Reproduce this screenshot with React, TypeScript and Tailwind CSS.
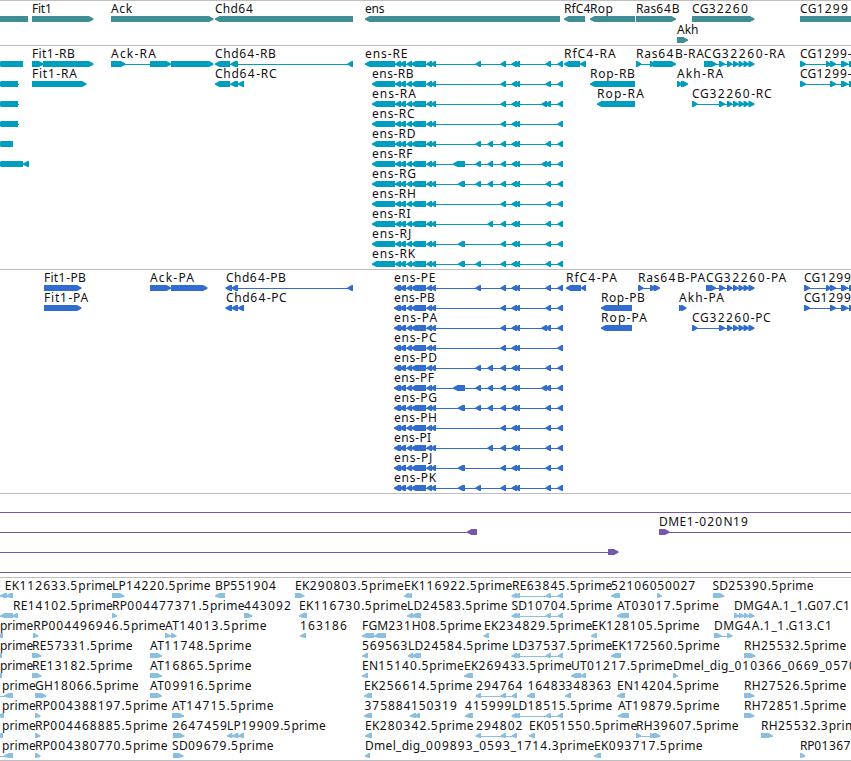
type Dir = "left" | "right";
type Span = [number, number];

type Feature = {
  row: number;
  dir: Dir;
  blocks: Span[];
  line?: Span;
  label?: string;
  // first and last pixel column of the label
  at?: Span;
};

type TrackData = {
  name: string;
  height: string;
  color: string;
  thickness: number;
  features: Feature[];
};

const TIP = 6;

function f(row: number, dir: Dir, blocks: Span[], label?: string, at?: Span, line?: Span): Feature {
  return { row, dir, blocks, label, at, line };
}

// Coding exons shared by all of the ens isoforms
const ENS_CORE: Span[] = [[399.5, 406], [406.5, 412], [411, 426], [426.5, 432], [431, 436]];
const ENS_TAIL: Span[] = [[500.5, 506], [511.5, 517], [515, 520], [557.5, 563]];

const ENS: { id: string; rEnd: number; pEnd: number; extra: Span[] }[] = [
  { id: "E", rEnd: 407.3, pEnd: 435.3, extra: [[475.5, 481], [545.5, 551]] },
  { id: "B", rEnd: 413.3, pEnd: 434.7, extra: [[545.5, 551]] },
  { id: "A", rEnd: 415.7, pEnd: 437, extra: [[541.5, 547], [545.5, 551]] },
  { id: "C", rEnd: 414.3, pEnd: 436.3, extra: [] },
  { id: "D", rEnd: 415.3, pEnd: 436.7, extra: [[475.5, 481], [487.5, 493], [545.5, 551]] },
  { id: "F", rEnd: 412.3, pEnd: 433.7, extra: [[453, 465], [475.5, 481], [487.5, 493], [541.5, 547], [545.5, 551]] },
  { id: "G", rEnd: 415.7, pEnd: 436.7, extra: [[458, 465], [475.5, 481], [487.5, 493], [545.5, 551]] },
  { id: "H", rEnd: 415.7, pEnd: 436.7, extra: [[545.5, 551]] },
  { id: "I", rEnd: 410.3, pEnd: 431, extra: [[487.5, 493], [545.5, 551]] },
  { id: "J", rEnd: 411, pEnd: 432, extra: [[458, 465], [545.5, 551]] },
  { id: "K", rEnd: 415, pEnd: 436, extra: [[458, 465], [475.5, 481], [545.5, 551]] },
];

const ensTranscripts = ENS.map((e, i) => {
  const start = i === 0 ? 365 : 372;
  const blocks: Span[] = [[start, 395], [395, 401], ...ENS_CORE, ...e.extra, ...ENS_TAIL];
  return f(i, "left", blocks, `ens-R${e.id}`, [start, e.rEnd], [395, 563]);
});

const ensProteins = ENS.map((e, i) => {
  const blocks: Span[] = [[394, 401], ...ENS_CORE, ...e.extra, ...ENS_TAIL];
  return f(i, "left", blocks, `ens-P${e.id}`, [394, e.pEnd], [395, 563]);
});

const CG32260_TAIL: Span[] = [[719, 725], [727, 732.5], [733, 738.5], [738.5, 744], [743.5, 749], [748.5, 754.5]];
const EST_LONG: Span[] = [[511.5, 517], [515, 520], [545.5, 551], [557.5, 563]];
const EST_SHORT: Span[] = [[475.5, 481], [500.5, 506], [511.5, 517]];

const tracks: TrackData[] = [
  {
    name: "genes",
    height: "h-[45px]",
    color: "#408e94",
    thickness: 6,
    features: [
      f(0, "left", [[-20, 28]]),
      f(0, "right", [[32, 93.5]], "Fit1", [32, 52.3]),
      f(0, "right", [[111, 213.5]], "Ack", [111, 132]),
      f(0, "left", [[215, 353]], "Chd64", [215, 253.5]),
      f(0, "left", [[365, 560]], "ens", [365, 384.3]),
      f(0, "left", [[564, 585]], "RfC4", [564, 591]),
      f(0, "left", [[590, 635]], "Rop", [590, 612.7]),
      f(0, "right", [[636, 676]], "Ras64B", [636, 679.3]),
      f(0, "right", [[692, 754.5]], "CG32260", [692, 748.3]),
      f(0, "right", [[800, 870]], "CG1299", [800, 848.3]),
      f(1.05, "right", [[677, 688]], "Akh", [677, 698.3]),
    ],
  },
  {
    name: "transcripts",
    height: "h-[224px]",
    color: "#009ebe",
    thickness: 6,
    features: [
      f(0, "left", [[-3, 23]]),
      f(1, "left", [[-3, 18]], undefined, undefined, [18, 19]),
      f(2, "left", [[-3, 18]], undefined, undefined, [18, 19]),
      f(3, "left", [[-3, 18]], undefined, undefined, [18, 19]),
      f(4, "left", [[-3, 13]]),
      f(5, "left", [[-3, 23], [23, 29]]),
      f(0, "right", [[32, 43.5], [43, 93.5]], "Fit1-RB", [32, 74.5]),
      f(1, "right", [[32, 86.5]], "Fit1-RA", [32, 76.7]),
      f(0, "right", [[111, 125.5], [150, 171], [171, 213.5]], "Ack-RA", [111, 155.7], [111, 200]),
      f(0, "left", [[215, 230], [230.5, 238], [347.5, 353]], "Chd64-RB", [215, 275.7], [230, 353]),
      f(1, "left", [[215, 230], [230.5, 238], [238, 244]], "Chd64-RC", [215, 276.3], [230, 243]),
      ...ensTranscripts,
      f(0, "left", [[564, 580], [580, 586]], "RfC4-RA", [564, 615.5]),
      f(1, "left", [[590, 635]], "Rop-RB", [590, 634.7]),
      f(2, "left", [[597, 635]], "Rop-RA", [597, 643.7]),
      f(0, "right", [[636, 641.5], [650, 655], [653, 676]], "Ras64B-RA", [636, 703.8], [636, 660]),
      f(0, "right", [[704, 716.5], ...CG32260_TAIL], "CG32260-RA", [704, 784.8], [704, 750]),
      f(2, "right", [[692, 697.5], ...CG32260_TAIL], "CG32260-RC", [692, 771.3], [692, 750]),
      f(1, "right", [[677, 682], [681, 688]], "Akh-RA", [677, 723]),
      f(0, "right", [[800, 806], [826, 831], [830, 836], [841, 848], [849, 855]], "CG1299-", [800, 851.5], [800, 851]),
      f(1, "right", [[800, 806], [830, 836], [841, 848], [849, 855]], "CG1299-", [800, 851.5], [800, 851]),
    ],
  },
  {
    name: "proteins",
    height: "h-[224px]",
    color: "#306dce",
    thickness: 6,
    features: [
      f(0, "right", [[44, 81.5]], "Fit1-PB", [44, 85.5]),
      f(1, "right", [[44, 81.5]], "Fit1-PA", [44, 88]),
      f(0, "right", [[150, 171], [171, 207.5]], "Ack-PA", [150, 193.7]),
      f(0, "left", [[225.5, 232], [231.5, 238], [347.5, 353]], "Chd64-PB", [226, 285.7], [230, 353]),
      f(1, "left", [[225.5, 232], [231.5, 238], [238, 244]], "Chd64-PC", [226, 286.5], [230, 243]),
      ...ensProteins,
      f(0, "left", [[566, 581], [581, 586]], "RfC4-PA", [566, 616.7]),
      f(1, "left", [[601, 632]], "Rop-PB", [601, 644.7]),
      f(2, "left", [[601, 632]], "Rop-PA", [601, 646.7]),
      f(0, "right", [[638, 643.5], [650, 655.5], [653.5, 660]], "Ras64B-PA", [638, 705], [638, 658]),
      f(0, "right", [[706, 716], ...CG32260_TAIL], "CG32260-PA", [706, 786], [706, 750]),
      f(2, "right", [[692, 697.5], ...CG32260_TAIL], "CG32260-PC", [692, 770.5], [692, 750]),
      f(1, "right", [[679, 683], [681, 686.5]], "Akh-PA", [679, 723.7]),
      f(0, "right", [[804, 810], [826, 831], [830, 836], [841, 848], [849, 855]], "CG1299", [804, 851.5], [804, 851]),
      f(1, "right", [[804, 810], [830, 836], [841, 848], [849, 855]], "CG1299", [804, 851.5], [804, 851]),
    ],
  },
  {
    name: "clones",
    height: "h-[84px]",
    color: "#7657a8",
    thickness: 6,
    features: [
      f(0, "right", [], undefined, undefined, [0, 851]),
      f(1, "left", [[467, 477]], undefined, undefined, [0, 470]),
      f(1, "right", [[659, 669.5]], "DME1-020N19", [659, 748.5], [665, 851]),
      f(2, "right", [[608, 618.5]], undefined, undefined, [0, 610]),
      f(3, "right", [], undefined, undefined, [0, 851]),
    ],
  },
  {
    name: "ests",
    height: "h-[184px] border-b",
    color: "#8abfe0",
    thickness: 5,
    features: [
      f(0, "left", [[0, 7], [6, 13]], "EK112633.5prime", [4.7, 112.7]),
      f(0, "right", [[112, 124.5]], "LP14220.5prime", [112, 210.3]),
      f(0, "left", [[215, 225]], "BP551904", [215, 276.3]),
      f(0, "right", [[295, 304.5]], "EK290803.5prime", [295, 403.5]),
      f(0, "left", [[404, 409], [407, 412]], "EK116922.5prime", [404, 512]),
      f(0, "left", EST_LONG, "RE63845.5prime", [512, 612], [515, 563]),
      f(0, "left", [[611, 620]], "521060", [611, 657.2]),
      f(0, "right", [[657, 662]], "50027", [657.3, 695.7]),
      f(0, "right", [[713, 724.5]], "SD25390.5prime", [712.5, 813.3]),

      f(1, "left", [[0, 13], [12, 18]], "RE14102.5prime", [13, 112.7]),
      f(1, "right", [[112, 117]], "RP004477371.5prime", [112, 244.3]),
      f(1, "right", [[244, 252.5]], "443092", [244, 291.3]),
      f(1, "left", [[299, 307]], "EK116730.5prime", [299, 407]),
      f(1, "left", [[407, 413], [411.5, 421]], "LD24583.5prime", [407, 507.3]),
      f(1, "left", EST_LONG, "SD10704.5prime", [511.5, 612], [515, 563]),
      f(1, "left", [[617, 629]], "AT03017.5prime", [617, 718.5]),
      f(1, "right", [[734, 739.5], [739, 744.5], [744, 749.5], [749, 754.5]], "DMG4A.1_1.G07.C1", [734, 850.5]),

      f(2, "left", [[-3, 3]], "prime", [0, 33]),
      f(2, "right", [[33, 38.5]], "RP004496946.5prime", [33.2, 165.3]),
      f(2, "right", [[165, 171], [171, 176.5]], "AT14013.5prime", [165, 266.3]),
      f(2, "left", [[300, 306]], "163186", [300, 347.3]),
      f(2, "left", [[362, 374], [374, 386]], "FGM231H08.5prime", [362, 481.3]),
      f(2, "left", [[483.5, 489]], "EK234829.5prime", [484, 592]),
      f(2, "left", [[591, 597]], "EK128105.5prime", [591.5, 699.3]),
      f(2, "right", [[714, 722], [727, 732.5]], "DMG4A.1_1.G13.C1", [714, 832.3], [714, 728]),

      f(3, "left", [[-4, 2]], "prime", [0, 33]),
      f(3, "right", [[32, 41.5]], "RE57331.5prime", [32, 132.3]),
      f(3, "right", [[150, 162]], "AT11748.5prime", [150, 251.3]),
      f(3, "left", [[362, 368]], "569563", [362, 408]),
      f(3, "left", [[408, 413], [411.5, 421]], "LD24584.5prime", [408, 508.3]),
      f(3, "left", EST_LONG, "LD37537.5prime", [512, 612], [515, 563]),
      f(3, "left", [[611, 621]], "EK172560.5prime", [611.5, 719.5]),
      f(3, "right", [[744, 755.5]], "RH25532.5prime", [744, 846]),

      f(4, "left", [[-4, 2]], "prime", [0, 33]),
      f(4, "right", [[32, 41.5]], "RE13182.5prime", [32, 132.3]),
      f(4, "right", [[150, 162]], "AT16865.5prime", [150, 251.3]),
      f(4, "left", [[362, 368]], "EN15140.5prime", [362, 463.7]),
      f(4, "left", [[464, 473]], "EK269433.5prime", [464, 571.5]),
      f(4, "left", [[571, 581], [580, 586]], "UT01217.5prime", [571, 672.7]),
      f(4, "right", [[673, 678]], "Dmel_dig_010366_0669_0570", [673, 856.5]),

      f(5, "left", [[4, 13]], "prime", [2, 35.5], [0, 8]),
      f(5, "right", [[35, 46.5]], "GH18066.5prime", [35, 138.3]),
      f(5, "right", [[150, 162]], "AT09916.5prime", [150, 251.3]),
      f(5, "left", [[364, 372]], "EK256614.5prime", [364, 472.3]),
      f(5, "left", EST_SHORT, "294764", [476, 523], [478, 516]),
      f(5, "left", [[527, 535]], "16483", [527.5, 566]),
      f(5, "left", [[565, 571]], "348363", [565.5, 611.7]),
      f(5, "left", [[617, 625]], "EN14204.5prime", [617, 718.5]),
      f(5, "right", [[744, 754.5]], "RH27526.5prime", [744, 846]),

      f(6, "left", [[-2, 4]], "prime", [2, 35.5]),
      f(6, "right", [[35, 40.5]], "RP004388197.5prime", [35, 167.3]),
      f(6, "right", [[172, 184]], "AT14715.5prime", [172, 273.3]),
      f(6, "left", [[364, 372]], "375884", [364.5, 411]),
      f(6, "left", [[410, 416], [414, 420]], "150319", [411, 457.3]),
      f(6, "left", [[465, 473]], "415999", [465, 512]),
      f(6, "left", EST_LONG, "LD18515.5prime", [512, 612], [515, 563]),
      f(6, "left", [[618, 629]], "AT19879.5prime", [618, 719.3]),
      f(6, "right", [[744, 754.5]], "RH72851.5prime", [744, 846]),

      f(7, "left", [[-3, 3]], "prime", [2, 35.5]),
      f(7, "right", [[35, 40.5]], "RP004468885.5prime", [35, 167.3]),
      f(7, "right", [[173, 184.5]], "2647459", [172.5, 227.5]),
      f(7, "left", [[227, 232.5], [232, 238.5], [238, 244]], "LP19909.5prime", [227, 325.5]),
      f(7, "left", [[365, 372]], "EK280342.5prime", [365, 473.3]),
      f(7, "left", EST_SHORT, "294802", [476, 523], [478, 516]),
      f(7, "left", [[529, 535]], "EK051550.5prime", [529, 637]),
      f(7, "right", [[636, 641.5], [650, 655.5], [653, 660.5]], "RH39607.5prime", [636, 738.3], [636, 655]),
      f(7, "right", [[761, 773]], "RH25532.3prime", [761, 863]),

      f(8, "left", [[4, 13]], "prime", [2, 35.5], [0, 8]),
      f(8, "right", [[35, 40.5]], "RP004380770.5prime", [35, 167.3]),
      f(8, "right", [[173, 183.5]], "SD09679.5prime", [172, 273.3]),
      f(8, "left", [[365, 370]], "Dmel_dig_009893_0593_1714.3prime", [365, 594]),
      f(8, "left", [[594, 601]], "EK093717.5prime", [594, 702.3]),
      f(8, "right", [[800, 805.5]], "RP01367", [800, 851]),
    ],
  },
];

// A bar whose leading end narrows to a slightly blunt point
function arrowPoints([a, b]: Span, top: number, thickness: number, dir: Dir) {
  const tip = Math.min(TIP, b - a);
  const shoulder = tip * 0.75;
  const mid = top + 3;
  const bottom = top + thickness;
  if (dir === "left") {
    return `${a},${mid - 0.6} ${a + shoulder},${top} ${b},${top} ${b},${bottom} ${a + shoulder},${bottom} ${a},${mid + 0.8}`;
  }
  return `${a},${top} ${b - shoulder},${top} ${b},${mid - 0.6} ${b},${mid + 0.8} ${b - shoulder},${bottom} ${a},${bottom}`;
}

// Digits are set a little wider than the letters around them
function Label({ text, at, y }: { text: string; at: Span; y: number }) {
  return (
    <text x={at[0]} y={y} textLength={at[1] - at[0] + 0.2} lengthAdjust="spacing" fill="#111">
      {text.split(/(\d+)/).map((run, i) =>
        /\d/.test(run) ? (
          <tspan key={i} className="tracking-[0.75px]">
            {run}
          </tspan>
        ) : (
          run
        ),
      )}
    </text>
  );
}

function FeatureGlyph({ feature, color, thickness }: { feature: Feature; color: string; thickness: number }) {
  const top = 15 + feature.row * 20;
  const { line, blocks, dir, label, at } = feature;
  return (
    <g fill={color}>
      {line && <rect x={line[0]} y={top + 3} width={line[1] - line[0]} height={1} />}
      {blocks.map((b, i) => (
        <polygon key={i} points={arrowPoints(b, top, thickness, dir)} />
      ))}
      {label && at && <Label text={label} at={at} y={top - 3} />}
    </g>
  );
}

function Track({ track }: { track: TrackData }) {
  return (
    <section className={`w-full overflow-hidden border-t border-[#bebebe] ${track.height}`}>
      <svg className="block h-full w-full font-['Noto_Sans',sans-serif] text-[12px]" aria-label={track.name}>
        {track.features.map((feature, i) => (
          <FeatureGlyph key={i} feature={feature} color={track.color} thickness={track.thickness} />
        ))}
      </svg>
    </section>
  );
}

export default function App() {
  return (
    <main className="flex h-[761px] w-[851px] flex-col overflow-hidden bg-white">
      {tracks.map((track) => (
        <Track key={track.name} track={track} />
      ))}
    </main>
  );
}
